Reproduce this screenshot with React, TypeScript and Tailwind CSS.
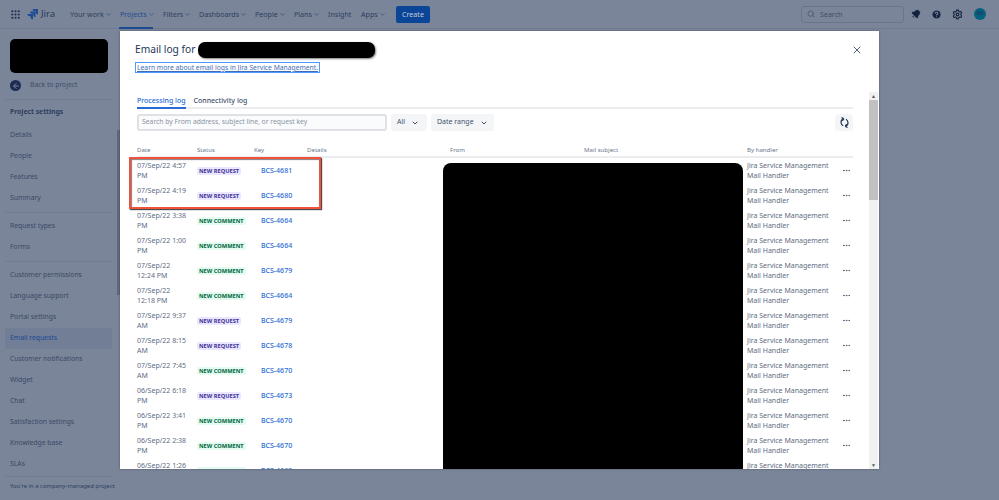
import { Bell, ChevronDown, CircleHelp, Grip, Search, Settings, X, ArrowLeft, Ellipsis } from "lucide-react";

const nav = [
  { t: "Your work", w: "w-[50px]", c: true },
  { t: "Projects", w: "w-[43px]", c: true, active: true },
  { t: "Filters", w: "w-[36px]", c: true },
  { t: "Dashboards", w: "w-[56px]", c: true },
  { t: "People", w: "w-[39px]", c: true },
  { t: "Plans", w: "w-[34px]", c: true },
  { t: "Insight", w: "w-[33px]", c: false },
  { t: "Apps", w: "w-[34px]", c: true },
];

const groups = [
  ["Details", "People", "Features", "Summary"],
  ["Request types", "Forms"],
  ["Customer permissions", "Language support", "Portal settings", "Email requests", "Customer notifications", "Widget", "Chat", "Satisfaction settings", "Knowledge base", "SLAs"],
];

const rows: [string, string, boolean, string][] = [
  ["07/Sep/22 4:57", "PM", true, "BCS-4681"],
  ["07/Sep/22 4:19", "PM", true, "BCS-4680"],
  ["07/Sep/22 3:38", "PM", false, "BCS-4664"],
  ["07/Sep/22 1:00", "PM", false, "BCS-4664"],
  ["07/Sep/22", "12:24 PM", false, "BCS-4679"],
  ["07/Sep/22", "12:18 PM", false, "BCS-4664"],
  ["07/Sep/22 9:37", "AM", true, "BCS-4679"],
  ["07/Sep/22 8:15", "AM", true, "BCS-4678"],
  ["07/Sep/22 7:45", "AM", false, "BCS-4670"],
  ["06/Sep/22 6:18", "PM", true, "BCS-4673"],
  ["06/Sep/22 3:41", "PM", false, "BCS-4670"],
  ["06/Sep/22 2:38", "PM", false, "BCS-4670"],
  ["06/Sep/22 1:26", "PM", false, "BCS-4669"],
];

function JiraMark() {
  return (
    <svg width="11" height="11" viewBox="0 0 24 24" className="mr-[3px]" fill="#1c4a93">
      <path d="M23 0H12a5 5 0 0 0 5 5h2v2a5 5 0 0 0 5 5V1a1 1 0 0 0-1-1Z" />
      <path d="M17.500 5.500H6.500a5 5 0 0 0 5 5h2v2a5 5 0 0 0 5 5v-11a1 1 0 0 0-1-1Z" />
      <path d="M12 11H1a5 5 0 0 0 5 5h2v2a5 5 0 0 0 5 5V12a1 1 0 0 0-1-1Z" />
    </svg>
  );
}

function RefreshArrows() {
  return (
    <svg width="11" height="11" viewBox="0 0 24 24" fill="none" stroke="#253858" strokeWidth="2.6" strokeLinecap="round" strokeLinejoin="round">
      <path d="M9.500 4C6 5.500 4 8.500 4.500 12.500C4.800 15 6 17 8 18.500" />
      <path d="M6.500 1.500L10 4L8 7.500" />
      <path d="M14.500 20C18 18.500 20 15.500 19.500 11.500C19.200 9 18 7 16 5.500" />
      <path d="M17.500 22.500L14 20L16 16.500" />
    </svg>
  );
}

export default function App() {
  return (
    <div className="relative w-[999px] h-[500px] overflow-hidden bg-[#7a8599] text-[#2f3e5e] text-[6.8px] font-['Noto_Sans','Liberation_Sans',sans-serif]">
      <header className="h-[29px] flex items-center border-b border-[#707b90]">
        <div className="w-[27px] pl-[10px] flex items-center">
          <Grip size={11} strokeWidth={2.6} className="text-[#1f2c4a]" />
        </div>
        <div className="w-[43px] flex items-center">
          <JiraMark />
          <span className="text-[9.500px] text-[#2b3b5e]">Jira</span>
        </div>
        {nav.map((n) => (
          <div key={n.t} className={`${n.w} h-[29px] relative flex items-center text-[7.100px] ${n.active ? "text-[#1c4a93]" : "text-[#2f3e5e]"}`}>
            <span>{n.t}</span>
            {n.c && <ChevronDown size={7} strokeWidth={2} className="ml-[1px]" />}
            {n.active && <div className="absolute left-[-1px] w-[34px] bottom-0 h-[2px] bg-[#1c4a93]" />}
          </div>
        ))}
        <button className="ml-[1px] w-[34px] h-[17px] rounded-[2px] bg-[#0b4597] text-[#c3cbd8] text-[7.100px]">Create</button>
        <div className="ml-auto w-[103px] h-[17px] rounded-[3px] border border-[#6a7589] flex items-center pl-[5px] gap-[5px] text-[7.100px] text-[#3f4d6b]">
          <Search size={8} />
          <span>Search</span>
        </div>
        <Bell size={10} className="ml-[7px] text-[#14233f] rotate-45" fill="#14233f" />
        <div className="ml-[10px] w-[11px] h-[11px] flex items-center justify-center">
          <CircleHelp size={13} className="text-[#7a8599]" fill="#14233f" strokeWidth={2.4} />
        </div>
        <Settings size={11} strokeWidth={2.4} className="ml-[10px] text-[#14233f]" />
        <div className="ml-[11px] mr-[13px] w-[12px] h-[12px] rounded-full bg-[#04617f] text-[5px] font-bold text-[#1d3f6a] flex items-center justify-center">BB</div>
      </header>

      <aside className="w-[120px] h-[471px] relative pl-[5px] pr-[8px]">
        <div className="absolute right-0 top-[101px] w-[3px] h-[165px] bg-[#5f6a80]" />
        <div className="pt-[10px] pl-[5px]">
          <div className="w-[98px] h-[34px] rounded-[5px] bg-black" />
        </div>
        <div className="h-[19px] mt-[3px] flex items-center pl-[5px] gap-[9px]">
          <span className="w-[11px] h-[11px] rounded-full bg-[#1b2d52] flex items-center justify-center">
            <ArrowLeft size={8} strokeWidth={3} className="text-[#7a8599]" />
          </span>
          <span className="text-[#3f4d6b]">Back to project</span>
        </div>
        <div className="h-px mt-[4px] bg-[#727d92]" />
        <div className="h-[25px] pl-[5px] flex items-center font-bold text-[6.800px] text-[#2f3e5e]">Project settings</div>
        {groups.map((g, i) => (
          <div key={i} className={i < 2 ? "border-b border-[#727d92] pb-[3px] mb-[3px]" : "border-b border-[#727d92] pb-[1px]"}>
            {g.map((s) => (
              <div key={s} className={`h-[21px] pl-[5px] flex items-center ${s === "Email requests" ? "bg-[#727d96] text-[#1c4a93]" : "text-[#3a4866]"}`}>{s}</div>
            ))}
          </div>
        ))}
        <div className="h-[18px] pl-[5px] flex items-center text-[5.900px] whitespace-nowrap">You're in a company-managed project</div>
      </aside>

      <section className="absolute left-[120px] top-[31px] w-[759px] h-[438px] bg-white flex flex-col overflow-hidden shadow-[0_0_2px_rgba(30,40,60,0.5)]">
        <div className="h-[61px] shrink-0 relative pl-[15px] pt-[10px]">
          <div className="flex items-center h-[18px]">
            <span className="text-[10.200px] text-[#253858]">Email log for</span>
            <span className="ml-[3px] w-[177px] h-[16px] rounded-[7px] bg-black shadow-[1px_1px_2px_rgba(0,0,0,0.5)]" />
          </div>
          <a className="inline-block mt-[3px] h-[11px] leading-[9px] px-px border border-[#4c9aff] text-[6.750px] text-[#3f6db5] underline whitespace-nowrap">Learn more about email logs in Jira Service Management.</a>
          <X size={12} strokeWidth={1.6} className="absolute right-[16px] top-[13px] text-[#253858]" />
        </div>
        <div className="flex flex-1 min-h-0">
          <div className="flex-1 min-w-0 pl-[17px] pr-[16px] overflow-hidden relative">
            <div className="flex gap-[8px] h-[16px] mt-[1px] border-b-2 border-[#ebecf0] text-[7px] font-medium leading-[15px]">
              <span className="h-[16px] border-b-2 border-[#2a6bd6] text-[#2a6bd6]">Processing log</span>
              <span className="text-[#42526e]">Connectivity log</span>
            </div>
            <div className="flex mt-[5px] h-[17px]">
              <div className="w-[250px] border-2 border-[#dfe1e6] rounded-[3px] flex items-center pl-[3px] text-[#8a93a3] text-[6.800px] bg-[#fafbfc]">Search by From address, subject line, or request key</div>
              <div className="ml-[4px] w-[36px] bg-[#f4f5f7] rounded-[3px] flex items-center pl-[6px] gap-[6px] text-[#42526e] text-[7px]">All <ChevronDown size={8} strokeWidth={3} /></div>
              <div className="ml-[4px] w-[63px] bg-[#f4f5f7] rounded-[3px] flex items-center pl-[6px] gap-[6px] text-[#42526e] text-[7px]">Date range <ChevronDown size={8} strokeWidth={3} /></div>
              <div className="ml-auto w-[18px] bg-[#f4f5f7] rounded-[3px] flex items-center justify-center">
                <RefreshArrows />
              </div>
            </div>
            <div className="flex h-[27px] pt-[13px] border-b-2 border-[#ebecf0] text-[#6b778c] text-[6.100px] leading-[11px]">
              <span className="w-[60px]">Date</span>
              <span className="w-[57px]">Status</span>
              <span className="w-[53px]">Key</span>
              <span className="w-[143px]">Details</span>
              <span className="w-[134px]">From</span>
              <span className="w-[163px]">Mail subject</span>
              <span>By handler</span>
            </div>
            {rows.map((r) => (
              <div key={r[0] + r[1]} className="flex h-[25px] items-center text-[7px] leading-[10px] text-[#5e6c84]">
                <div className="w-[60px] shrink-0 pr-[2px]">
                  <div>{r[0]}</div>
                  <div>{r[1]}</div>
                </div>
                <div className="w-[64px] shrink-0">
                  <span className="inline-block">
                    <span className={`inline-block px-[2px] h-[8px] rounded-[2px] leading-[8px] text-[5.700px] font-bold whitespace-nowrap ${r[2] ? "bg-[#eae6ff] text-[#403294]" : "bg-[#e3fcef] text-[#006644]"}`}>{r[2] ? "NEW REQUEST" : "NEW COMMENT"}</span>
                  </span>
                </div>
                <div className="w-[486px] shrink-0 font-medium text-[#2a6bd6]">{r[3]}</div>
                <div className="w-[90px] shrink-0 text-[#616c80] whitespace-nowrap">
                  <div>Jira Service Management</div>
                  <div>Mail Handler</div>
                </div>
                <Ellipsis size={9} className="ml-[5px] text-[#42526e]" />
              </div>
            ))}
            <div className="absolute left-[323px] top-[71px] w-[300px] h-[320px] rounded-[8px] bg-black" />
            <div className="absolute left-[9px] top-[65px] w-[192px] h-[52px] border-2 border-[#f2513b] shadow-[1px_1px_1px_rgba(0,0,0,0.7),inset_1px_1px_1px_rgba(0,0,0,0.5)]" />
          </div>
          <div className="w-[9px] mr-px shrink-0 bg-[#f1f1f1] flex flex-col items-center">
            <span className="h-[8px] text-[5px] leading-[8px] text-[#555]">▲</span>
            <div className="w-full h-[100px] bg-[#c1c1c1]" />
            <span className="mt-auto h-[8px] text-[5px] leading-[8px] text-[#555]">▼</span>
          </div>
        </div>
      </section>
    </div>
  );
}
